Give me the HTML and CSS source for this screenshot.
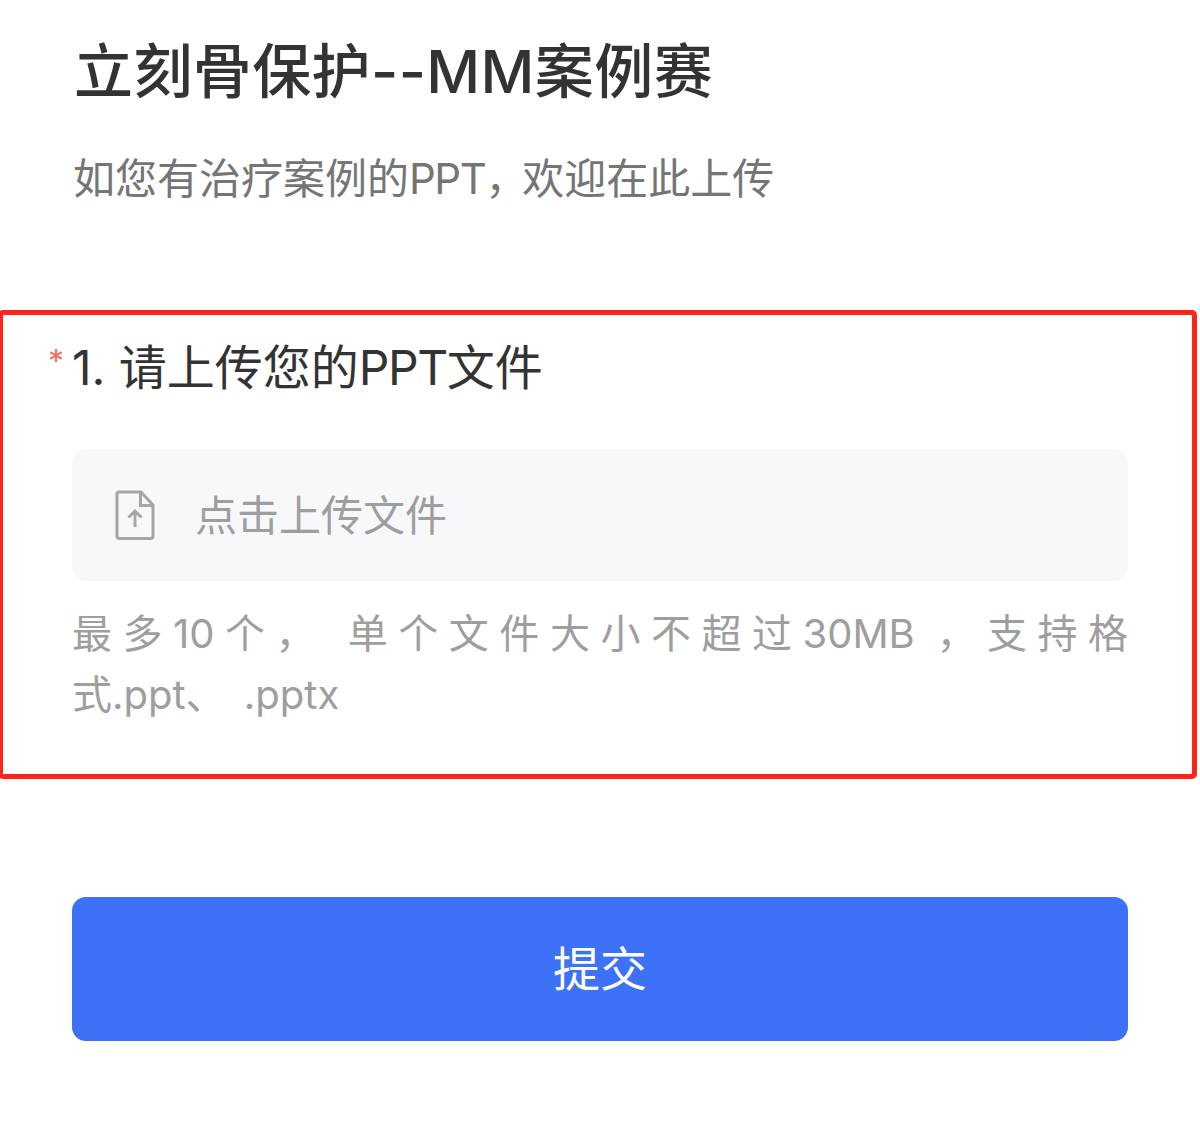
FILE: index.html
```html
<!DOCTYPE html>
<html lang="zh">
<head>
  <meta charset="UTF-8">
  <title>立刻骨保护--MM案例赛</title>
  <link rel="stylesheet" href="styles.css">
</head>
<body>
  <div class="page">
    <h1 class="title">立刻骨保护--MM案例赛</h1>
    <p class="desc">如您有治疗案例的<span class="latin">PPT</span><span class="comma">，</span>欢迎在此上传</p>

    <div class="question">
      <div class="question-title"><span class="required">*</span>1. 请上传您的<span class="latin">PPT</span>文件</div>
      <div class="upload">
        <svg class="upload-icon" width="40" height="50" viewBox="0 0 40 50" fill="none" stroke="#a6a6a6" stroke-width="3">
          <path d="M4 2h22l12 13v31a2.500 2.500 0 0 1-2.500 2.500h-31A2.500 2.500 0 0 1 2 46V4a2 2 0 0 1 2-2z"/>
          <path d="M25.500 2v13.500H38"/>
          <path d="M20 37V21M13.500 27.500l6.500-6.500 6.500 6.500"/>
        </svg>
        <span class="upload-text">点击上传文件</span>
      </div>
      <p class="hint">
        <span class="hint-line hint-full">最多10个， 单个文件大小不超过30MB ，支持格</span>
        <span class="hint-line hint-last">式.ppt、 .pptx</span>
      </p>
    </div>

    <button class="submit" type="button">提交</button>
  </div>
</body>
</html>
```

FILE: styles.css
```css
body {
  margin: 0;
  background: #fff;
  font-family: Inter, "Noto Sans CJK SC", "Noto Sans", sans-serif;
}
.page {
  width: 1200px;
  height: 1125px;
  box-sizing: border-box;
  padding-top: 29px;
  overflow: hidden;
}
.title {
  margin: 0 0 0 74px;
  font-size: 59px;
  line-height: 86px;
  font-weight: 500;
  letter-spacing: 0.4px;
  color: #333;
}
.desc {
  margin: 33px 0 0 73px;
  font-size: 42px;
  line-height: 62px;
  color: #757575;
}
.latin {
  letter-spacing: -1.5px;
}
.comma {
  letter-spacing: -5px;
}
.question {
  width: 1199px;
  height: 469px;
  box-sizing: border-box;
  margin: 100px 0 0 -2px;
  padding: 24px 64px 0 69px;
  border: 5px solid #fe2419;
  border-radius: 5px;
}
.question-title {
  position: relative;
  font-size: 48px;
  line-height: 58px;
  font-weight: 400;
  color: #333;
}
.required {
  position: absolute;
  left: -24px;
  top: -6px;
  font-size: 32px;
  color: #e8735f;
}
.upload {
  display: flex;
  align-items: center;
  height: 132px;
  margin-top: 52px;
  padding-left: 43px;
  background: #f7f8fa;
  border-radius: 14px;
}
.upload-icon {
  flex-shrink: 0;
}
.upload-text {
  margin-left: 40px;
  padding-bottom: 6px;
  font-size: 42px;
  color: #9e9e9e;
}
.hint {
  margin: 22px 0 0;
  font-size: 40px;
  line-height: 61px;
  color: #9e9e9e;
}
.hint-line {
  display: block;
}
.hint-full {
  text-align: justify;
  text-align-last: justify;
}
.hint-last {
  word-spacing: 7px;
}
.submit {
  display: block;
  width: 1056px;
  height: 144px;
  margin: 118px 0 0 72px;
  padding: 0 0 8px;
  background: #3d71f8;
  color: #fff;
  border: none;
  border-radius: 14px;
  font-family: inherit;
  font-size: 47px;
}
```
